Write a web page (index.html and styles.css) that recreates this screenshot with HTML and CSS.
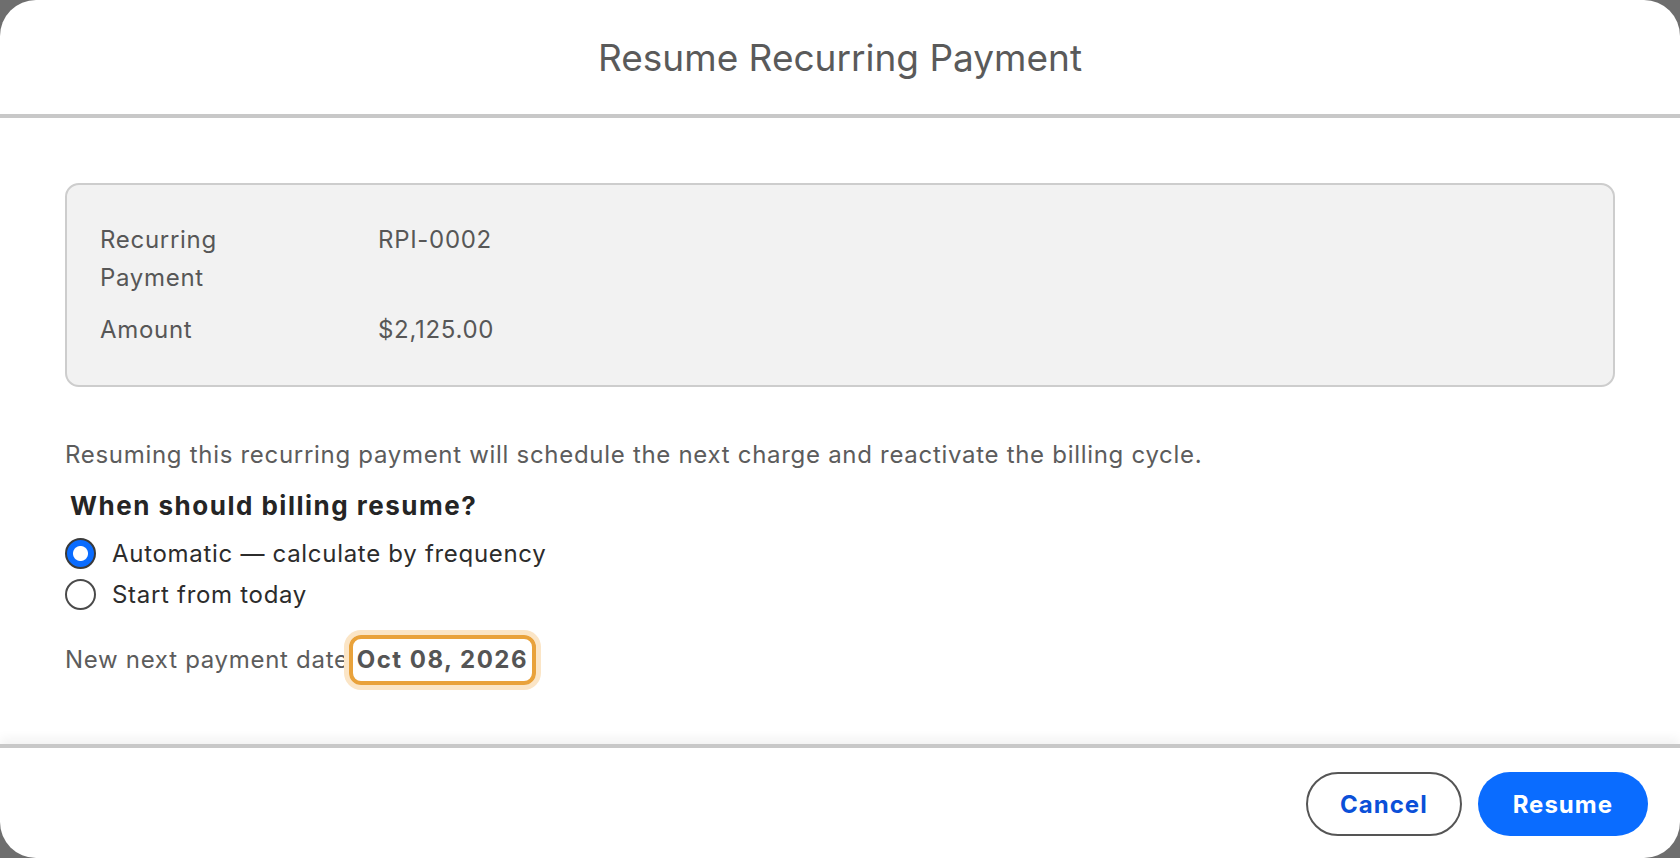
FILE: index.html
```html
<!DOCTYPE html>
<html lang="en">
<head>
    <meta charset="UTF-8">
    <meta name="viewport" content="width=device-width, initial-scale=1.0">
    <title>Resume Recurring Payment</title>
    <link rel="stylesheet" href="styles.css">
</head>
<body>
    <div class="dialog">
        <header class="dialog-header">
            <h1>Resume Recurring Payment</h1>
        </header>
        <main class="dialog-body">
            <div class="summary">
                <div class="summary-label">Recurring Payment</div>
                <div class="summary-value">RPI-0002</div>
                <div class="summary-label">Amount</div>
                <div class="summary-value">$2,125.00</div>
            </div>
            <p class="note">Resuming this recurring payment will schedule the next charge and reactivate the billing cycle.</p>
            <fieldset class="options">
                <legend>When should billing resume?</legend>
                <label class="option">
                    <input type="radio" name="resume" value="auto" checked>
                    <span>Automatic — calculate by frequency</span>
                </label>
                <label class="option">
                    <input type="radio" name="resume" value="today">
                    <span>Start from today</span>
                </label>
            </fieldset>
            <p class="next-date">New next payment date<span class="date-box">Oct 08, 2026</span></p>
        </main>
        <footer class="dialog-footer">
            <button class="btn btn-outline">Cancel</button>
            <button class="btn btn-primary">Resume</button>
        </footer>
    </div>
</body>
</html>
```

FILE: styles.css
```css
html, body {
    height: 100%;
}
body {
    margin: 0;
    background-color: #6e6e6e;
    font-family: Inter, "Noto Sans", sans-serif;
    font-size: 24px;
    letter-spacing: 0.7px;
    color: #5a5a5a;
}
.dialog {
    height: 100%;
    background-color: #ffffff;
    border-radius: 36px;
    display: flex;
    flex-direction: column;
    overflow: hidden;
}
.dialog-header {
    height: 114px;
    border-bottom: 4px solid #c8c8c8;
    display: flex;
    align-items: center;
    justify-content: center;
    flex-shrink: 0;
}
.dialog-header h1 {
    margin: 0;
    font-size: 37px;
    font-weight: 400;
    letter-spacing: 0;
    color: #5a5a5a;
}
.dialog-body {
    flex: 1;
    padding: 65px 65px 0;
}
.summary {
    background-color: #f2f2f2;
    border: 2px solid #cdcdcd;
    border-radius: 14px;
    padding: 36px 33px;
    display: grid;
    grid-template-columns: 150px 1fr;
    column-gap: 128px;
    row-gap: 14px;
    line-height: 38px;
    color: #575757;
}
.note {
    margin: 50px 0 0;
    line-height: 36px;
    color: #5c5c5c;
}
.options {
    border: none;
    margin: 15px 0 0;
    padding: 0;
}
.options legend {
    padding: 0 0 0 5px;
    font-size: 26px;
    font-weight: 700;
    letter-spacing: 1.5px;
    color: #252525;
    line-height: 36px;
}
.option {
    display: flex;
    align-items: center;
    gap: 16px;
    height: 41px;
    color: #2c2c2c;
}
.option:first-of-type {
    margin-top: 9px;
}
.option input {
    appearance: none;
    margin: 0;
    width: 31px;
    height: 31px;
    border: 2px solid #4a4a4a;
    border-radius: 50%;
    background-color: #ffffff;
    flex-shrink: 0;
}
.option input:checked {
    border-color: #3a3a3a;
    background: radial-gradient(circle, #ffffff 0 7px, #0a6cff 8px);
}
.next-date {
    margin: 20px 0 0;
    line-height: 36px;
    color: #5c5c5c;
}
.date-box {
    display: inline-block;
    border: 4px solid #e9a23b;
    border-radius: 12px;
    padding: 3px 4px;
    line-height: 36px;
    font-weight: 700;
    letter-spacing: 1.5px;
    color: #555555;
    box-shadow: 0 0 0 5px #fbe5c6;
}
.dialog-footer {
    flex-shrink: 0;
    height: 114px;
    border-top: 4px solid #c8c8c8;
    box-shadow: 0 -6px 10px rgba(0, 0, 0, 0.05);
    display: flex;
    justify-content: flex-end;
    align-items: flex-start;
    gap: 16px;
    padding: 24px 32px 0;
    box-sizing: border-box;
}
.btn {
    height: 64px;
    border-radius: 32px;
    font-family: inherit;
    font-size: 24px;
    font-weight: 700;
    letter-spacing: 1px;
    padding: 0 32px;
    cursor: pointer;
}
.btn-outline {
    background-color: #ffffff;
    border: 2px solid #555555;
    color: #0b50d8;
}
.btn-primary {
    background-color: #0a6cff;
    border: none;
    color: #ffffff;
    padding: 0 35px;
}
```
